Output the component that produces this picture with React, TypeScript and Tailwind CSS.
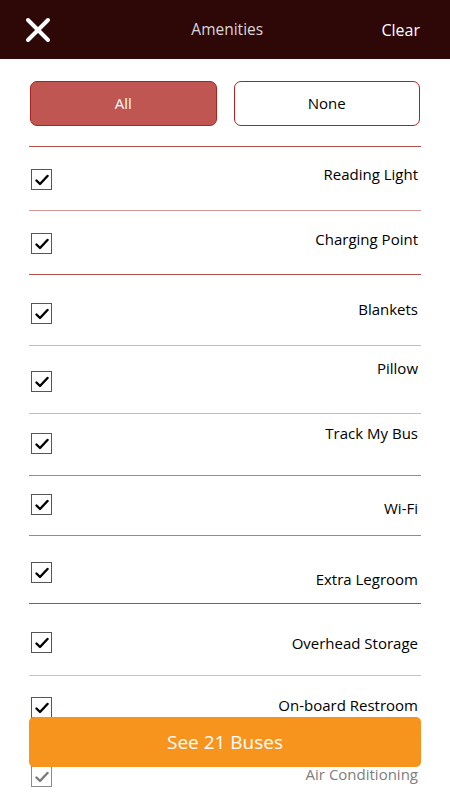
import React, { useState } from 'react';

type Amenity = {
  name: string;
  row: string;
  box: string;
  text: string;
  line: string;
};

const amenities: Amenity[] = [
  { name: 'Reading Light', row: 'h-[63px]', box: 'mt-[22px]', text: 'mt-[17px]', line: 'bg-[#b5524e]' },
  { name: 'Charging Point', row: 'h-[63px]', box: 'mt-[22px]', text: 'mt-[18px]', line: 'bg-[#d49896]' },
  { name: 'Blankets', row: 'h-[70px]', box: 'mt-[28px]', text: 'mt-[24px]', line: 'bg-[#b5524e]' },
  { name: 'Pillow', row: 'h-[67px]', box: 'mt-[25px]', text: 'mt-[12px]', line: 'bg-[#e0aeac]' },
  { name: 'Track My Bus', row: 'h-[61px]', box: 'mt-[19px]', text: 'mt-[9px]', line: 'bg-[#e0aeac]' },
  { name: 'Wi-Fi', row: 'h-[59px]', box: 'mt-[18px]', text: 'mt-[22px]', line: 'bg-[#cf7371]' },
  { name: 'Extra Legroom', row: 'h-[67px]', box: 'mt-[26px]', text: 'mt-[33px]', line: 'bg-[#cf7371]' },
  { name: 'Overhead Storage', row: 'h-[71px]', box: 'mt-[28px]', text: 'mt-[29px]', line: 'bg-[#c8403c]' },
  { name: 'On-board Restroom', row: 'h-[63px]', box: 'mt-[21px]', text: 'mt-[19px]', line: 'bg-[#e6b8b6]' },
  { name: 'Air Conditioning', row: 'h-[63px]', box: 'mt-[26px]', text: 'mt-[24px]', line: 'bg-[#e6b8b6]' },
];

const Check: React.FC<{ faded?: boolean }> = ({ faded }) => (
  <div
    className={`w-[21px] h-[21px] border flex items-center justify-center bg-white ${
      faded ? 'border-[#8a8a8a]' : 'border-[#555]'
    }`}
  >
    <svg width="14" height="12" viewBox="0 0 14 12" fill="none">
      <path
        d="M1.5 6.5l3.5 3.5L12.5 2"
        stroke={faded ? '#7a7a7a' : '#000'}
        strokeWidth={2.4}
        strokeLinecap="round"
        strokeLinejoin="round"
      />
    </svg>
  </div>
);

export default function App() {
  const [checked, setChecked] = useState<boolean[]>(amenities.map(() => true));

  return (
    <div
      className="relative w-[450px] h-[800px] overflow-hidden bg-white"
      style={{ fontFamily: '"Open Sans", "DejaVu Sans", sans-serif' }}
    >
      {/* header */}
      <div className="h-[59px] bg-[#2e0707] flex items-center justify-between pl-[25px] pr-[30px]">
        <svg width="26" height="26" viewBox="0 0 26 26">
          <path d="M3 3l20 20M23 3L3 23" stroke="#fff" strokeWidth={4} strokeLinecap="round" />
        </svg>
        <span className="text-[15.5px] text-[#d8d8d8] ml-[22px]">Amenities</span>
        <span className="text-[16px] text-white font-medium">Clear</span>
      </div>

      {/* all / none */}
      <div className="flex gap-[17px] px-[30px] pt-[22px]">
        <button
          onClick={() => setChecked(amenities.map(() => true))}
          className="flex-1 h-[45px] rounded-[7px] bg-[#bf5651] border border-[#b1201c] text-white text-[15px]"
        >
          All
        </button>
        <button
          onClick={() => setChecked(amenities.map(() => false))}
          className="flex-1 h-[45px] rounded-[7px] bg-white border border-[#b1201c] text-black text-[15px]"
        >
          None
        </button>
      </div>

      {/* list */}
      <div className="mx-[29px] mt-[20px]">
        {amenities.map((a, i) => {
          const faded = i === amenities.length - 1;
          return (
            <div key={a.name} onClick={() => setChecked(c => c.map((v, j) => (j === i ? !v : v)))}>
              <div className={`h-px ${a.line}`} />
              <div className={`${a.row} flex items-start justify-between pl-[2px]`}>
                <div className={a.box}>
                  {checked[i] ? <Check faded={faded} /> : <div className="w-[21px] h-[21px] border border-[#555]" />}
                </div>
                <span
                  className={`${a.text} leading-[20px] text-[15px] pr-[3px] ${faded ? 'text-[#7d7d7d]' : 'text-black'}`}
                >
                  {a.name}
                </span>
              </div>
            </div>
          );
        })}
      </div>

      {/* see buses */}
      <button className="absolute left-[29px] right-[29px] top-[717px] h-[50px] rounded-[5px] bg-[#f7941e] text-white text-[19px]">
        See 21 Buses
      </button>
    </div>
  );
}
